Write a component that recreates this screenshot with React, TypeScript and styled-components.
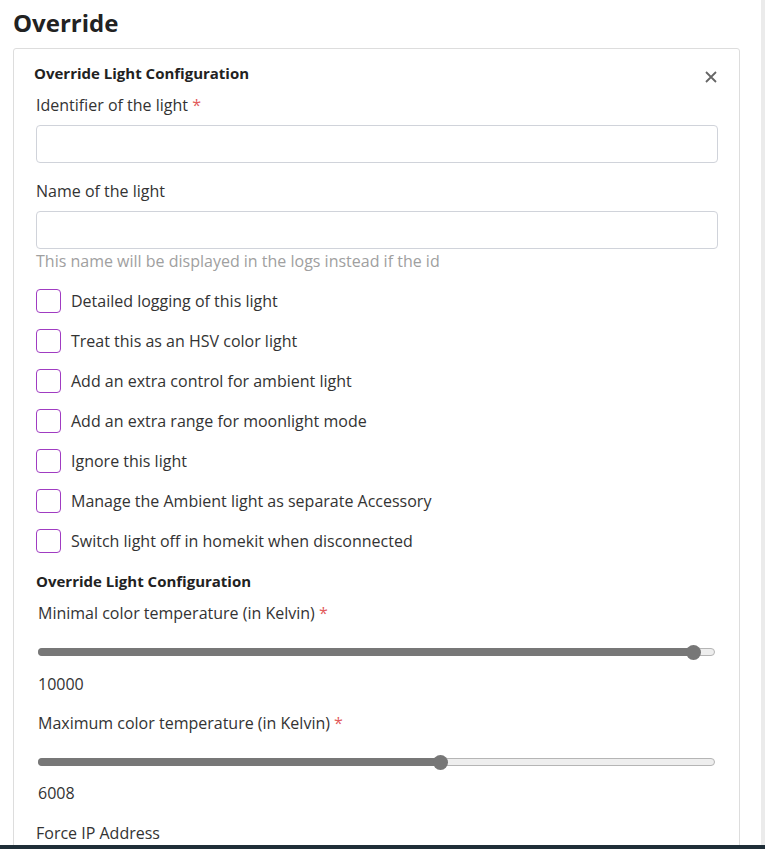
import React from "react";
import styled, { createGlobalStyle } from "styled-components";

const GlobalStyle = createGlobalStyle`
  html, body {
    margin: 0;
    padding: 0;
    background: #fff;
  }
  body {
    font-family: "Open Sans", "Noto Sans", sans-serif;
    color: #333;
    overflow: hidden;
  }
`;

const Viewport = styled.div`
  position: relative;
  width: 765px;
  height: 849px;
  overflow: hidden;
  display: flex;
`;

const Page = styled.div`
  flex: 1;
  padding: 0 21px 0 13px;
`;

const Scrollbar = styled.div`
  width: 4px;
  background: #ebebeb;
`;

const BottomBar = styled.div`
  position: absolute;
  left: 0;
  right: 0;
  bottom: 0;
  height: 4px;
  background: #1f2e38;
`;

const Title = styled.h2`
  margin: 0;
  padding-top: 8px;
  height: 48px;
  box-sizing: border-box;
  font-size: 24px;
  font-weight: 700;
  color: #222;
  line-height: 30px;
`;

const Card = styled.div`
  border: 1px solid #ddd;
  border-radius: 3px;
  padding: 12px 21px 40px 20px;
`;

const CardHead = styled.div`
  display: flex;
  justify-content: space-between;
  align-items: center;
  height: 24px;
`;

const CardTitle = styled.div`
  font-size: 15px;
  font-weight: 700;
  color: #222;
`;

const Close = styled.div`
  width: 16px;
  height: 16px;
  margin-top: 7px;
  margin-right: -1px;
  display: flex;
  align-items: center;
  justify-content: center;
`;

const Fields = styled.div`
  padding-left: 2px;
`;

const Label = styled.div<{ $indent?: number; $gap: number }>`
  font-size: 16px;
  line-height: 22px;
  color: #333;
  padding-left: ${(p) => p.$indent ?? 0}px;
  margin-top: ${(p) => p.$gap}px;
`;

const Star = styled.span`
  color: #e25a5a;
`;

const Input = styled.div`
  height: 38px;
  box-sizing: border-box;
  border: 1px solid #d0d3da;
  border-radius: 4px;
  margin-top: 9px;
`;

const Help = styled.div`
  font-size: 16px;
  line-height: 22px;
  color: #a0a0a0;
  margin-top: 1px;
  margin-bottom: 9px;
`;

const CheckRow = styled.div`
  display: flex;
  align-items: center;
  gap: 10px;
  height: 40px;
`;

const Box = styled.div`
  width: 25px;
  height: 24px;
  box-sizing: border-box;
  border: 1px solid #a03cc2;
  border-radius: 4px;
`;

const CheckText = styled.span`
  font-size: 16px;
  color: #333;
`;

const SubTitle = styled.div`
  font-size: 15px;
  font-weight: 700;
  color: #222;
  margin-top: 9px;
  line-height: 22px;
`;

const SliderWrap = styled.div`
  position: relative;
  margin: 21px 3px 0 2px;
  height: 14px;
  display: flex;
  align-items: center;
`;

const Track = styled.div`
  position: relative;
  flex: 1;
  height: 8px;
  box-sizing: border-box;
  border: 1px solid #b5b5b5;
  background: #eee;
  border-radius: 4px;
`;

const Fill = styled.div`
  position: absolute;
  left: -1px;
  top: -1px;
  bottom: -1px;
  background: #777;
  border-radius: 4px;
`;

const Thumb = styled.div`
  position: absolute;
  top: 50%;
  width: 15px;
  height: 15px;
  margin-left: -7.5px;
  margin-top: -7.5px;
  border-radius: 50%;
  background: #777;
`;

const Value = styled.div<{ $gap: number }>`
  font-size: 16px;
  color: #333;
  margin-top: ${(p) => p.$gap}px;
  padding-left: 2px;
  line-height: 22px;
`;

const checks = [
  "Detailed logging of this light",
  "Treat this as an HSV color light",
  "Add an extra control for ambient light",
  "Add an extra range for moonlight mode",
  "Ignore this light",
  "Manage the Ambient light as separate Accessory",
  "Switch light off in homekit when disconnected",
];

const Slider = ({ pct }: { pct: number }) => (
  <SliderWrap>
    <Track>
      <Fill style={{ width: `calc(${pct}% + 1px)` }} />
      <Thumb style={{ left: `${pct}%` }} />
    </Track>
  </SliderWrap>
);

export default function App() {
  return (
    <Viewport>
      <GlobalStyle />
      <Page>
        <Title>Override</Title>
        <Card>
          <CardHead>
            <CardTitle>Override Light Configuration</CardTitle>
            <Close>
              <svg width="12" height="12" viewBox="0 0 12 12">
                <path d="M1 1L11 11M11 1L1 11" stroke="#666" strokeWidth="1.8" />
              </svg>
            </Close>
          </CardHead>
          <Fields>
            <Label $gap={9}>
              Identifier of the light <Star>*</Star>
            </Label>
            <Input />
            <Label $gap={17}>Name of the light</Label>
            <Input />
            <Help>This name will be displayed in the logs instead if the id</Help>
            {checks.map((c) => (
              <CheckRow key={c}>
                <Box />
                <CheckText>{c}</CheckText>
              </CheckRow>
            ))}
            <SubTitle>Override Light Configuration</SubTitle>
            <Label $gap={10} $indent={2}>
              Minimal color temperature (in Kelvin) <Star>*</Star>
            </Label>
            <Slider pct={97} />
            <Value $gap={14}>10000</Value>
            <Label $gap={17} $indent={2}>
              Maximum color temperature (in Kelvin) <Star>*</Star>
            </Label>
            <Slider pct={59.5} />
            <Value $gap={13}>6008</Value>
            <Label $gap={18}>Force IP Address</Label>
          </Fields>
        </Card>
      </Page>
      <Scrollbar />
      <BottomBar />
    </Viewport>
  );
}
